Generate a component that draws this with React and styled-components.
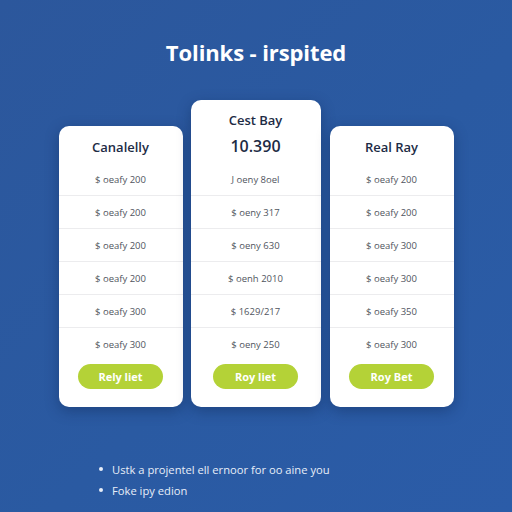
import React from "react";
import styled, { createGlobalStyle } from "styled-components";

const GlobalStyle = createGlobalStyle`
  html, body {
    margin: 0;
    padding: 0;
  }
  body {
    font-family: "Open Sans", "Liberation Sans", sans-serif;
  }
`;

const Page = styled.div`
  width: 512px;
  height: 512px;
  overflow: hidden;
  display: flex;
  flex-direction: column;
  align-items: center;
  background: linear-gradient(135deg, #2c579c 0%, #2a5aa2 55%, #2b5ca8 100%);
`;

const Title = styled.h1`
  margin: 38px 0 0;
  font-family: "Open Sans", sans-serif;
  font-size: 22px;
  font-weight: 700;
  line-height: 28px;
  color: #ffffff;
  letter-spacing: -0.1px;
`;

const Plans = styled.div`
  margin-top: 34px;
  display: flex;
  align-items: flex-end;
  gap: 8px;
`;

const Card = styled.div`
  width: ${(p) => (p.$featured ? 130 : 124)}px;
  background: #ffffff;
  border-radius: 10px;
  box-shadow: 0 4px 14px rgba(10, 30, 70, 0.35);
  display: flex;
  flex-direction: column;
  align-items: center;
  padding: 10px 0 18px;
  box-sizing: border-box;
  margin-left: ${(p) => (p.$last ? 1 : 0)}px;
`;

const PlanName = styled.div`
  font-family: "Open Sans", sans-serif;
  font-size: 13px;
  font-weight: 600;
  line-height: 20px;
  color: #1d2b45;
  margin-bottom: ${(p) => (p.$withPrice ? 4 : 6)}px;
  padding-top: ${(p) => (p.$withPrice ? 0 : 1)}px;
`;

const Price = styled.div`
  font-family: "Open Sans", sans-serif;
  font-size: 16px;
  font-weight: 600;
  line-height: 24px;
  color: #1d2b45;
  margin-bottom: 5px;
`;

const Rows = styled.div`
  width: 100%;
  display: flex;
  flex-direction: column;
`;

const Row = styled.div`
  height: 33px;
  display: flex;
  align-items: center;
  justify-content: center;
  font-family: "Open Sans", sans-serif;
  font-size: 9.5px;
  color: #50555e;
  border-bottom: 1px solid #ececee;
  box-sizing: border-box;
  &:last-child {
    border-bottom: none;
  }
`;

const BuyButton = styled.button`
  margin-top: 3px;
  width: 85px;
  height: 25px;
  border: none;
  border-radius: 13px;
  background: #b4d237;
  color: #ffffff;
  font-family: "Open Sans", sans-serif;
  font-size: 11px;
  font-weight: 700;
  cursor: pointer;
`;

const Notes = styled.ul`
  align-self: flex-start;
  margin: 52px 0 0 98px;
  padding: 0;
  list-style: none;
`;

const Note = styled.li`
  position: relative;
  padding-left: 14px;
  font-family: "Open Sans", sans-serif;
  font-size: 11.2px;
  line-height: 21px;
  color: #e8eef8;
  &::before {
    content: "";
    position: absolute;
    left: 1px;
    top: 8px;
    width: 4px;
    height: 4px;
    border-radius: 50%;
    background: #e8eef8;
  }
`;

const plans = [
  {
    name: "Canalelly",
    rows: ["$ oeafy 200", "$ oeafy 200", "$ oeafy 200", "$ oeafy 200", "$ oeafy 300", "$ oeafy 300"],
    cta: "Rely liet",
  },
  {
    name: "Cest Bay",
    price: "10.390",
    featured: true,
    rows: ["J oeny 8oel", "$ oeny 317", "$ oeny 630", "$ oenh 2010", "$ 1629/217", "$ oeny 250"],
    cta: "Roy liet",
  },
  {
    name: "Real Ray",
    last: true,
    rows: ["$ oeafy 200", "$ oeafy 200", "$ oeafy 300", "$ oeafy 300", "$ oeafy 350", "$ oeafy 300"],
    cta: "Roy Bet",
  },
];

export default function App() {
  return (
    <Page>
      <GlobalStyle />
      <Title>Tolinks - irspited</Title>
      <Plans>
        {plans.map((plan) => (
          <Card key={plan.name} $featured={plan.featured} $last={plan.last}>
            <PlanName $withPrice={!!plan.price}>{plan.name}</PlanName>
            {plan.price && <Price>{plan.price}</Price>}
            <Rows>
              {plan.rows.map((r, i) => (
                <Row key={i}>{r}</Row>
              ))}
            </Rows>
            <BuyButton>{plan.cta}</BuyButton>
          </Card>
        ))}
      </Plans>
      <Notes>
        <Note>Ustk a projentel ell ernoor for oo aine you</Note>
        <Note>Foke ipy edion</Note>
      </Notes>
    </Page>
  );
}
